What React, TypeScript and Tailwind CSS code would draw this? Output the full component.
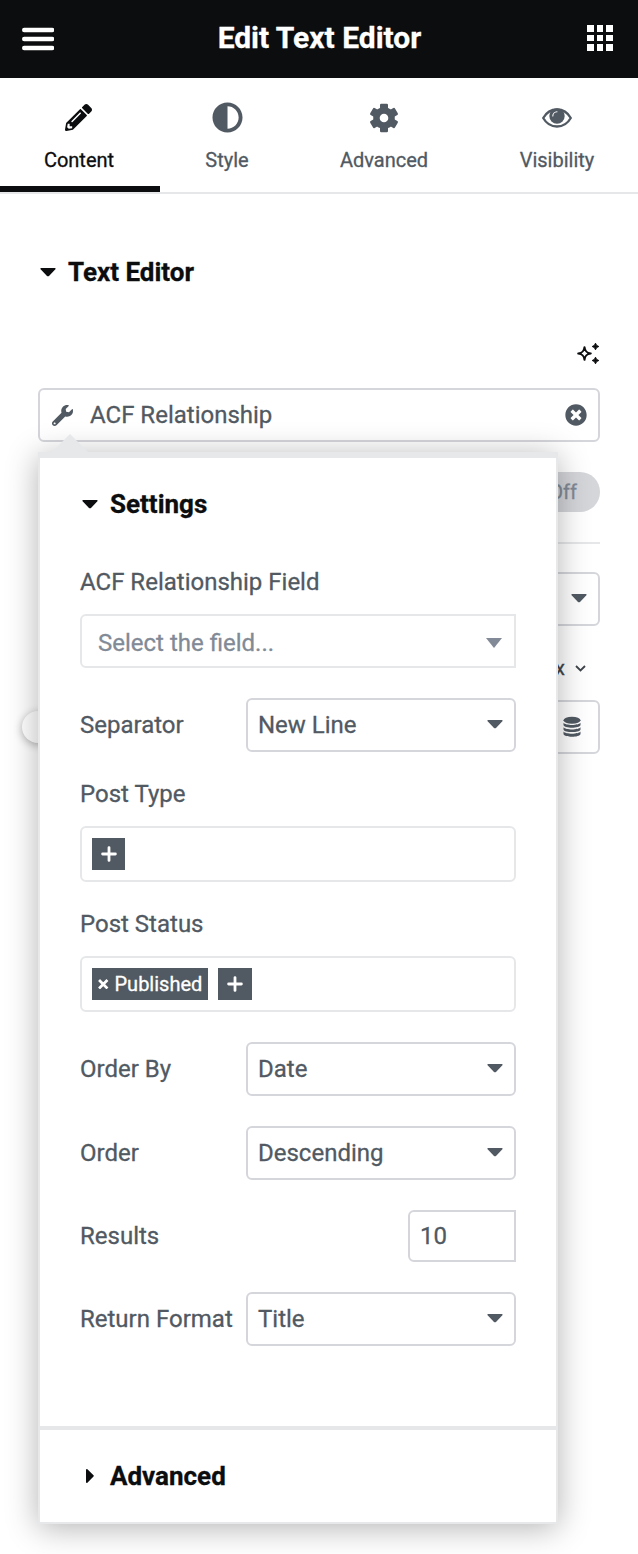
import type { ReactNode } from 'react';
import { FaAdjust, FaPencilAlt, FaTimesCircle, FaWrench } from 'react-icons/fa';

function CaretDown({ className = '' }: { className?: string }) {
  return (
    <svg width="16" height="9" viewBox="0 0 16 9" className={className} fill="currentColor">
      <path d="M1.1 0h13.8c.7 0 1 .8.5 1.3L9 7.9c-.6.6-1.4.6-2 0L.6 1.3C.1.8.4 0 1.1 0z" />
    </svg>
  );
}

function GearIcon() {
  return (
    <svg width="30" height="30" viewBox="-15 -15 30 30">
      <g fill="currentColor">
        <circle r="10.8" />
        {[0, 60, 120].map((angle) => (
          <rect key={angle} x="-4" y="-14.3" width="8" height="28.6" rx="1.2" transform={`rotate(${angle})`} />
        ))}
      </g>
      <circle r="4.3" fill="#fff" />
    </svg>
  );
}

function EyeIcon() {
  return (
    <svg width="30" height="30" viewBox="0 0 30 30" fill="none">
      <path
        d="M1.2 15C4.5 9.2 9.5 6.5 15 6.5S25.5 9.2 28.8 15C25.5 20.8 20.5 23.5 15 23.5S4.500 20.8 1.2 15z"
        stroke="currentColor"
        strokeWidth="2.3"
        strokeLinejoin="round"
      />
      <circle cx="15" cy="13" r="7.7" fill="currentColor" />
      <path d="M10.8 13a4.3 4.3 0 0 1 4.2-4.2" stroke="#fff" strokeWidth="1.1" strokeLinecap="round" />
    </svg>
  );
}

function SparklesIcon() {
  return (
    <svg width="24" height="24" viewBox="0 0 24 24" fill="none">
      <path
        d="M8.5 5.2C9 9.5 10.6 11 14.8 11.5C10.6 12 9 13.5 8.5 17.8C8 13.5 6.4 12 2.2 11.5C6.4 11 8 9.5 8.5 5.2z"
        stroke="#0c0d0e"
        strokeWidth="2"
        strokeLinejoin="round"
      />
      <path d="M19.5 1.2l1.1 2.2 2.2 1.1-2.2 1.1-1.1 2.2-1.1-2.2-2.2-1.1 2.2-1.1z" fill="#0c0d0e" stroke="#0c0d0e" strokeLinejoin="round" />
      <path d="M19.5 15.2l1.1 2.2 2.2 1.1-2.2 1.1-1.1 2.2-1.1-2.2-2.2-1.1 2.2-1.1z" fill="#0c0d0e" stroke="#0c0d0e" strokeLinejoin="round" />
    </svg>
  );
}

function DatabaseIcon() {
  return (
    <svg width="18" height="22" viewBox="0 0 18 22" fill="currentColor">
      <ellipse cx="9" cy="4.2" rx="8.5" ry="3.5" />
      <path d="M.5 6.8c2 2.9 15 2.9 17 0v2.3c-1 3.6-16 3.6-17 0z" />
      <path d="M.5 11.3c2 2.9 15 2.9 17 0v2.1c-1 3.6-16 3.6-17 0z" />
      <path d="M.5 15.6c2 2.9 15 2.9 17 0v2.3c-1 3.7-16 3.7-17 0z" />
    </svg>
  );
}

function PlusButton({ className }: { className: string }) {
  return (
    <button className={`flex h-8 items-center justify-center bg-[#515962] text-white ${className}`}>
      <svg width="16" height="16" viewBox="0 0 16 16" stroke="currentColor" strokeWidth="2.8" strokeLinecap="round">
        <path d="M8 1.6v12.8M1.6 8h12.8" />
      </svg>
    </button>
  );
}

function Tab({ icon, label, className }: { icon: ReactNode; label: string; className: string }) {
  return (
    <div className={`flex h-full shrink-0 flex-col items-center pt-6 ${className}`}>
      <div className="flex h-[31px] items-center">{icon}</div>
      <span className="mt-[15px] text-[20px] leading-6">{label}</span>
    </div>
  );
}

function Select({ value }: { value: string }) {
  return (
    <div className="flex h-[54px] w-[270px] items-center justify-between rounded-[6px] border-2 border-[#d5d6dc] pl-2.5 pr-[11.5px]">
      <span>{value}</span>
      <CaretDown className="mb-0.5" />
    </div>
  );
}

function Row({ label, children }: { label: string; children: ReactNode }) {
  return (
    <div className="flex items-center justify-between">
      <span className="whitespace-nowrap">{label}</span>
      {children}
    </div>
  );
}

function SettingsPopover() {
  return (
    <div className="absolute left-[38px] top-[452px] w-[520px] border-2 border-t-[6px] border-[#e6e8ea] bg-white shadow-[0_4px_30px_rgba(0,0,0,0.3)]">
      <svg width="36" height="18" viewBox="0 0 36 18" className="absolute -top-6 left-[12px]">
        <path d="M0 18L18 0l18 18z" fill="#e6e8ea" />
      </svg>
      <div className="flex h-[92px] items-center gap-3 px-[42px] text-[26px] font-bold text-[#0c0d0e]">
        <CaretDown />
        <span>Settings</span>
      </div>

      <div className="px-10 pb-20 pt-4">
        <div className="h-8 leading-8">ACF Relationship Field</div>
        <div className="mt-4 flex h-[54px] items-center justify-between rounded-l-[6px] border-2 border-[#e6e7e9] pl-4 pr-3 pt-[3px] text-[#818a96]">
          <span>Select the field...</span>
          <svg width="16" height="10" viewBox="0 0 16 10" fill="currentColor">
            <path d="M0 0h16L8 10z" />
          </svg>
        </div>
        <div className="mt-[30px]">
          <Row label="Separator">
            <Select value="New Line" />
          </Row>
        </div>
        <div className="mt-[26px] h-8 leading-8">Post Type</div>
        <div className="mt-4 flex h-14 items-center rounded-[6px] border-2 border-[#e6e7e9] px-2.5">
          <PlusButton className="w-[33px]" />
        </div>
        <div className="mt-[26px] h-8 leading-8">Post Status</div>
        <div className="mt-4 flex h-14 items-center gap-2.5 rounded-[6px] border-2 border-[#e6e7e9] px-2.5">
          <div className="flex h-8 w-[116px] items-center gap-[6px] bg-[#515962] pl-[6px] text-[20px] text-white">
            <svg width="10.5" height="10.5" viewBox="0 0 10 10" stroke="currentColor" strokeWidth="2.6">
              <path d="M1 1l8 8M9 1L1 9" />
            </svg>
            <span>Published</span>
          </div>
          <PlusButton className="w-[34px]" />
        </div>
        <div className="mt-[30px] flex flex-col gap-[30px]">
          <Row label="Order By">
            <Select value="Date" />
          </Row>
          <Row label="Order">
            <Select value="Descending" />
          </Row>
          <Row label="Results">
            <div className="flex h-[52px] w-[108px] items-center rounded-l-[6px] border-2 border-[#d5d6dc] px-2.5">10</div>
          </Row>
          <Row label="Return Format">
            <Select value="Title" />
          </Row>
        </div>
      </div>

      <div className="flex h-24 items-center border-t-4 border-[#e6e7e9] pl-[46px] text-[26px] font-bold text-[#0c0d0e]">
        <svg width="8" height="14" viewBox="0 0 8 14" fill="currentColor">
          <path d="M0 1c0-.9.8-1.3 1.4-.7L7.5 6.2c.4.4.4 1 0 1.4L1.4 13.7C.8 14.3 0 13.900 0 13z" />
        </svg>
        <span className="ml-4">Advanced</span>
      </div>
    </div>
  );
}

export default function App() {
  return (
    <div className="relative h-[1554px] w-[638px] overflow-hidden bg-white font-[Roboto,sans-serif] text-[24px] text-[#515962] [-webkit-text-stroke:0.3px]">
      <header className="flex h-[78px] items-center justify-between bg-[#0c0d0e] pl-[22px] pr-[25px] text-white">
        <svg width="32" height="24" viewBox="0 0 32 24" stroke="currentColor" strokeWidth="4.4" strokeLinecap="round">
          <path d="M2.2 3h28M2.2 12h28M2.2 21h28" />
        </svg>
        <h1 className="pb-1 pr-0.5 text-[30px] font-bold">Edit Text Editor</h1>
        <div className="mb-0.5 grid grid-cols-3 gap-[3px]">
          {Array.from({ length: 9 }, (_, i) => (
            <span key={i} className="h-[6.7px] w-[6.7px] bg-white" />
          ))}
        </div>
      </header>

      <nav className="flex h-[116px] border-b-2 border-[#e6e7e9]">
        <div className="relative text-[#0c0d0e]">
          <Tab className="w-[158px]" label="Content" icon={<FaPencilAlt size={27} className="mr-0.5" />} />
          <div className="absolute bottom-0 left-0 h-1.5 w-40 bg-[#0c0d0e]" />
        </div>
        <Tab className="w-[138px]" label="Style" icon={<FaAdjust size={31} />} />
        <Tab className="w-[176px]" label="Advanced" icon={<GearIcon />} />
        <Tab className="w-[166px] pl-1" label="Visibility" icon={<EyeIcon />} />
      </nav>

      <main className="px-[38px]">
        <div className="flex h-[156px] items-center gap-3 pl-0.5 text-[26px] font-bold text-[#0c0d0e]">
          <CaretDown />
          <span>Text Editor</span>
        </div>
        <div className="-mt-2 flex justify-end">
          <SparklesIcon />
        </div>
        <div className="mt-[22px] flex h-[54px] items-center rounded-[6px] border-2 border-[#d5d6dc] pl-3 pr-[11px]">
          <FaWrench size={21} />
          <span className="ml-[17px]">ACF Relationship</span>
          <FaTimesCircle size={22} className="mb-px ml-auto" />
        </div>
        <div className="mt-[30px] flex justify-end">
          <div className="flex h-10 w-[84px] items-center justify-end rounded-full bg-[#d5d6da] pr-[23px] text-[20px] text-[#818a96]">Off</div>
        </div>
        <div className="mt-[30px] h-0.5 bg-[#e6e7e9]" />
        <div className="mt-7 flex h-[54px] items-center justify-end rounded-[6px] border-2 border-[#d5d6dc] pr-[11.5px]">
          <CaretDown className="mb-0.5" />
        </div>
        <div className="flex h-[74px] items-center justify-end gap-[10px] pr-[14px] pt-2.5 text-[20px] text-[#3f444b]">
          <span>px</span>
          <svg width="11" height="7" viewBox="0 0 11 7" fill="none" stroke="currentColor" strokeWidth="1.8">
            <path d="M1 1l4.500 4.500L10 1" />
          </svg>
        </div>
        <div className="relative flex h-[54px] items-center justify-end rounded-[6px] border-2 border-[#d5d6dc] pr-[17.5px]">
          <DatabaseIcon />
          <div className="absolute -left-[18px] top-[9px] size-8 rounded-full bg-white shadow-[0_2px_8px_rgba(0,0,0,0.3)]" />
        </div>
      </main>

      <SettingsPopover />
    </div>
  );
}
